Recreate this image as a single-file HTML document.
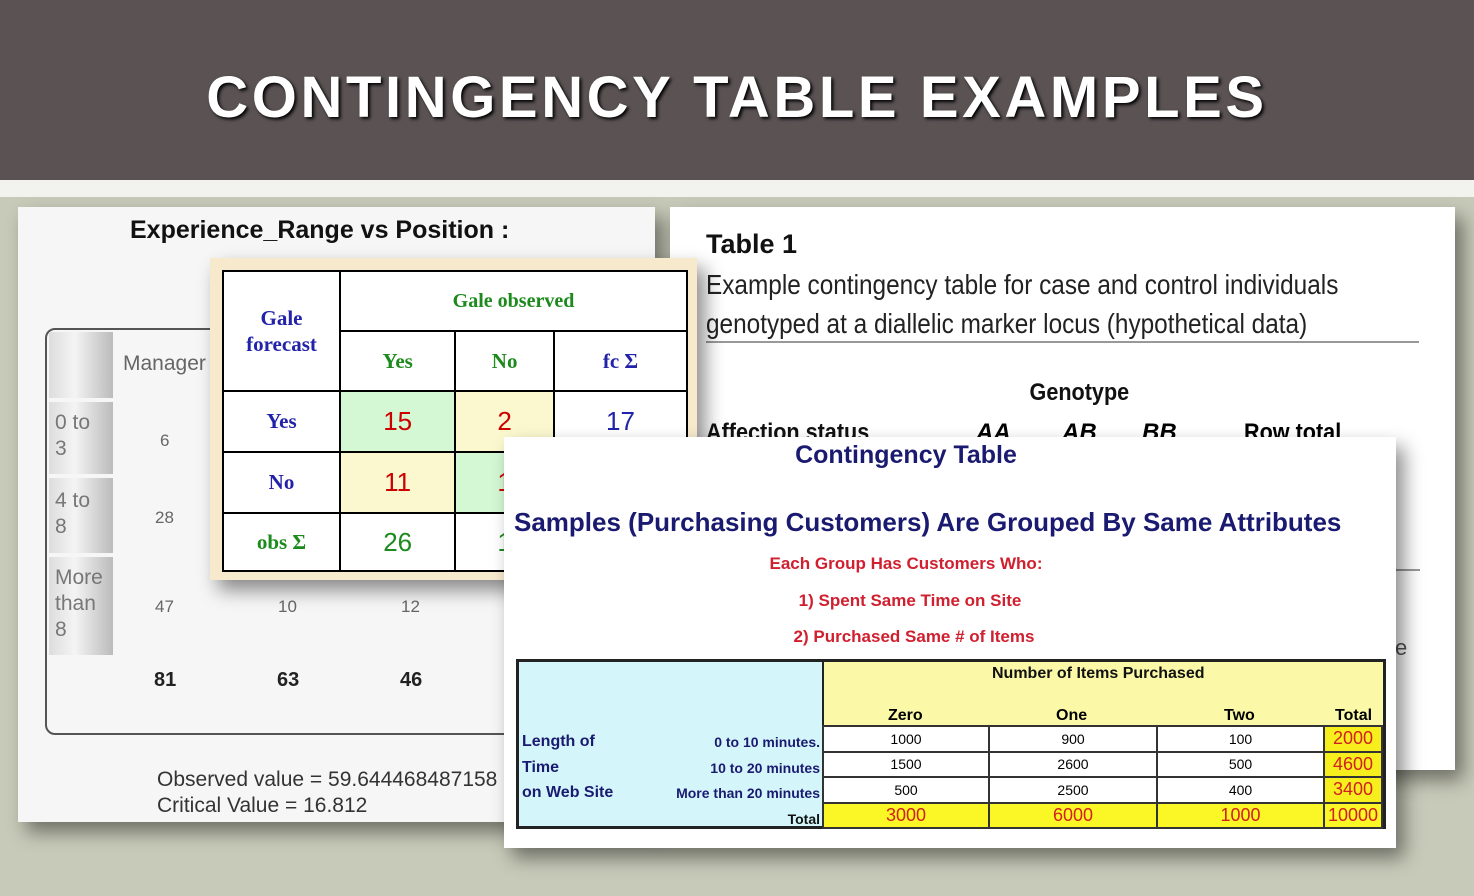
<!DOCTYPE html>
<html><head><style>
*{margin:0;padding:0;box-sizing:border-box}
body{width:1474px;height:896px;overflow:hidden;background:#c8cab9;font-family:"Liberation Sans",sans-serif;position:relative}
.a{position:absolute}
.hdr{left:0;top:0;width:1474px;height:180px;background:#5a5253}
.hdr h1{position:absolute;left:0;width:1474px;top:64px;text-align:center;color:#fff;font-size:58px;letter-spacing:3.6px;font-weight:bold;text-shadow:2px 2px 3px #000}
.strip{left:0;top:180px;width:1474px;height:17px;background:#f2f2ee}
.t{position:absolute;white-space:nowrap}
.sh{box-shadow:8px 10px 18px rgba(0,0,0,.45)}
.lab{position:absolute;background:linear-gradient(90deg,#ddd,#f4f4f4 40%,#bbb);color:#777;font-size:21px;line-height:26px;padding-left:6px}
.g td{border:2px solid #000;text-align:center;font-family:"Liberation Serif",serif;font-weight:bold}
.c td{border:2px solid #333;text-align:center;font-size:14px}
</style></head><body>
<div class="a hdr"><h1>CONTINGENCY TABLE EXAMPLES</h1></div>
<div class="a strip"></div>

<div class="a sh" style="left:18px;top:207px;width:637px;height:615px;background:#f6f6f6">
 <div class="t" style="left:112px;top:9px;font-size:25px;font-weight:bold;color:#111">Experience_Range vs Position :</div>
 <div class="a" style="left:27px;top:121px;width:640px;height:407px;border:2px solid #555;border-radius:10px"></div>
 <div class="lab" style="left:31px;top:125px;width:64px;height:66px"></div>
 <div class="t" style="left:105px;top:145px;font-size:21px;color:#666">Manager</div>
 <div class="lab" style="left:31px;top:195px;width:64px;height:72px;padding-top:8px">0 to<br>3</div>
 <div class="lab" style="left:31px;top:271px;width:64px;height:75px;padding-top:10px">4 to<br>8</div>
 <div class="lab" style="left:31px;top:350px;width:64px;height:98px;padding-top:8px">More<br>than<br>8</div>
 <div class="t" style="left:142px;top:224px;font-size:17px;color:#666">6</div>
 <div class="t" style="left:137px;top:301px;font-size:17px;color:#666">28</div>
 <div class="t" style="left:137px;top:390px;font-size:17px;color:#666">47</div>
 <div class="t" style="left:260px;top:390px;font-size:17px;color:#666">10</div>
 <div class="t" style="left:383px;top:390px;font-size:17px;color:#666">12</div>
 <div class="t" style="left:136px;top:462px;font-size:20px;font-weight:bold;color:#222">81</div>
 <div class="t" style="left:259px;top:462px;font-size:20px;font-weight:bold;color:#222">63</div>
 <div class="t" style="left:382px;top:462px;font-size:20px;font-weight:bold;color:#222">46</div>
 <div class="t" style="left:139px;top:560px;font-size:21px;color:#333;line-height:26px">Observed value = 59.644468487158<br>Critical Value = 16.812</div>
</div>

<div class="a sh" style="left:670px;top:207px;width:785px;height:563px;background:#fff">
 <div class="t" style="left:36px;top:22px;font-size:27px;font-weight:bold;color:#111">Table 1</div>
 <div class="t" style="left:36px;top:58px;font-size:28px;color:#222;line-height:39px;transform:scaleX(.87);transform-origin:left">Example contingency table for case and control individuals<br>genotyped at a diallelic marker locus (hypothetical data)</div>
 <div class="a" style="left:36px;top:134px;width:713px;height:2px;background:#999"></div>
 <div class="t" style="left:354px;top:172px;font-size:24px;font-weight:bold;color:#111;transform:scaleX(.9)">Genotype</div>
 <div class="t" style="left:36px;top:212px;font-size:24px;font-weight:bold;color:#111;transform:scaleX(.9);transform-origin:left">Affection status</div>
 <div class="t" style="left:306px;top:212px;font-size:24px;font-weight:bold;font-style:italic">AA</div>
 <div class="t" style="left:392px;top:212px;font-size:24px;font-weight:bold;font-style:italic">AB</div>
 <div class="t" style="left:472px;top:212px;font-size:24px;font-weight:bold;font-style:italic">BB</div>
 <div class="t" style="left:574px;top:212px;font-size:24px;font-weight:bold;transform:scaleX(.9);transform-origin:left">Row total</div>
 <div class="a" style="left:720px;top:362px;width:30px;height:2px;background:#999"></div>
 <div class="t" style="left:725px;top:428px;font-size:22px;color:#555">e</div>
</div>

<div class="a sh" style="left:210px;top:258px;width:487px;height:322px;background:#f6e9cc">
 <table class="g" style="position:absolute;left:12px;top:12px;width:466px;height:300px;border-collapse:collapse;background:#fff">
  <tr style="height:60px"><td rowspan="2" style="width:117px;color:#2222aa;font-size:21px;line-height:26px">Gale<br>forecast</td><td colspan="3" style="color:#1c8a1c;font-size:20px">Gale observed</td></tr>
  <tr style="height:60px"><td style="color:#1c8a1c;font-size:21px">Yes</td><td style="color:#1c8a1c;font-size:21px">No</td><td style="color:#2222aa;font-size:21px">fc Σ</td></tr>
  <tr style="height:61px"><td style="color:#2222aa;font-size:21px">Yes</td><td style="background:#d4f8d4;color:#c00;font-family:'Liberation Sans';font-weight:normal;font-size:26px">15</td><td style="background:#fbf8cf;color:#c00;font-family:'Liberation Sans';font-weight:normal;font-size:26px">2</td><td style="color:#2222aa;font-family:'Liberation Sans';font-weight:normal;font-size:26px">17</td></tr>
  <tr style="height:61px"><td style="color:#2222aa;font-size:21px">No</td><td style="background:#fbf8cf;color:#c00;font-family:'Liberation Sans';font-weight:normal;font-size:26px">11</td><td style="background:#d4f8d4;color:#c00;font-family:'Liberation Sans';font-weight:normal;font-size:26px">1</td><td></td></tr>
  <tr style="height:58px"><td style="color:#1c8a1c;font-size:21px">obs Σ</td><td style="color:#1c8a1c;font-family:'Liberation Sans';font-weight:normal;font-size:26px">26</td><td style="color:#1c8a1c;font-family:'Liberation Sans';font-weight:normal;font-size:26px">1</td><td></td></tr>
 </table>
</div>

<div class="a sh" style="left:504px;top:437px;width:892px;height:411px;background:#fff">
 <div class="t" style="left:0;width:804px;text-align:center;top:4px;font-size:25px;font-weight:bold;color:#1a1a70">Contingency Table</div>
 <div class="t" style="left:10px;top:70px;font-size:26px;font-weight:bold;color:#1a1a70">Samples (Purchasing Customers) Are Grouped By Same Attributes</div>
 <div class="t" style="left:0;width:804px;text-align:center;top:117px;font-size:17px;font-weight:bold;color:#d02030">Each Group Has Customers Who:</div>
 <div class="t" style="left:0;width:812px;text-align:center;top:154px;font-size:17px;font-weight:bold;color:#d02030">1) Spent Same Time on Site</div>
 <div class="t" style="left:0;width:820px;text-align:center;top:190px;font-size:17px;font-weight:bold;color:#d02030">2) Purchased Same # of Items</div>
 <div class="a" style="left:12px;top:222px;width:870px;height:170px;border:3px solid #222;background:#d4f6fa"></div>
 <div class="a" style="left:318px;top:225px;width:561px;height:64px;background:#fbf9a8;border-left:2px solid #222"></div>
 <div class="t" style="left:488px;top:228px;font-size:16px;font-weight:bold;color:#111">Number of Items Purchased</div>
 <div class="t" style="left:384px;top:270px;font-size:16px;font-weight:bold">Zero</div>
 <div class="t" style="left:552px;top:270px;font-size:16px;font-weight:bold">One</div>
 <div class="t" style="left:720px;top:270px;font-size:16px;font-weight:bold">Two</div>
 <div class="t" style="left:831px;top:270px;font-size:16px;font-weight:bold">Total</div>
 <div class="t" style="left:18px;top:292px;font-size:16px;font-weight:bold;color:#1a1a70;line-height:25.5px">Length of<br>Time<br>on Web Site</div>
 <div class="t" style="left:130px;width:186px;text-align:right;top:293px;font-size:14px;font-weight:bold;color:#1a1a70;line-height:25.5px">0 to 10 minutes.<br>10 to 20 minutes<br>More than 20 minutes<br><span style="color:#111">Total</span></div>
 <table class="c" style="position:absolute;left:318px;top:288px;width:561px;height:104px;border-collapse:collapse;background:#fff">
  <tr><td style="width:166px">1000</td><td style="width:168px">900</td><td style="width:167px">100</td><td style="background:#f7ee1e;color:#d02020;font-size:18px">2000</td></tr>
  <tr><td>1500</td><td>2600</td><td>500</td><td style="background:#f7ee1e;color:#d02020;font-size:18px">4600</td></tr>
  <tr><td>500</td><td>2500</td><td>400</td><td style="background:#f7ee1e;color:#d02020;font-size:18px">3400</td></tr>
  <tr style="background:#fbf726;color:#d02020"><td style="font-size:18px">3000</td><td style="font-size:18px">6000</td><td style="font-size:18px">1000</td><td style="font-size:18px">10000</td></tr>
 </table>
</div>
</body></html>
